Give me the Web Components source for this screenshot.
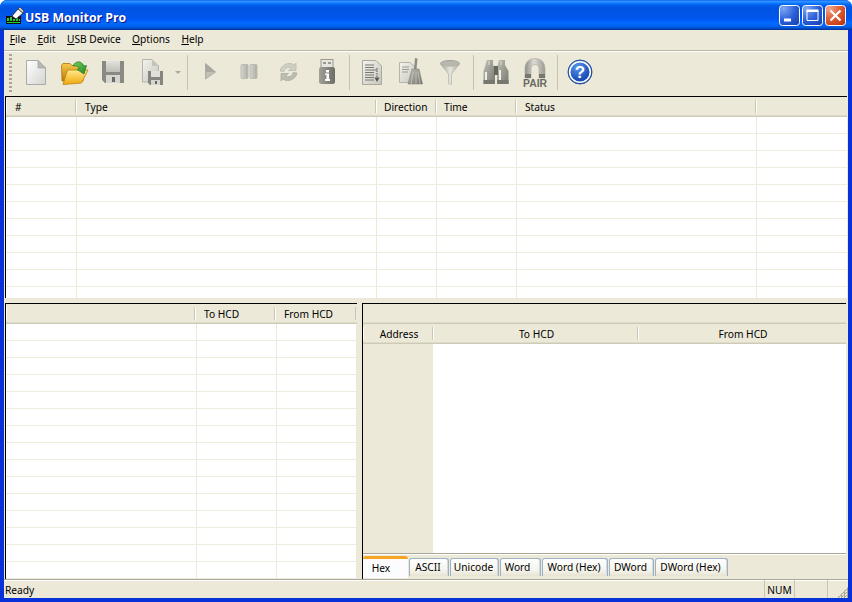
<!DOCTYPE html>
<html lang="en"><head><meta charset="utf-8"><title>USB Monitor Pro</title>
<style>
html,body{margin:0;padding:0;background:#fff}
body{font:10.2px "Noto Sans","DejaVu Sans",sans-serif;color:#000}
svg.defs{display:block;width:0;height:0}
</style></head><body>
<svg class="defs" aria-hidden="true"><defs>
<linearGradient id="pg" x1="0" y1="0" x2="1" y2="1"><stop offset="0" stop-color="#fff"/><stop offset="1" stop-color="#d4d4d0"/></linearGradient>
<linearGradient id="pg2" x1="0" y1="0" x2="1" y2="1"><stop offset="0" stop-color="#f4f4ee"/><stop offset="1" stop-color="#c6c6be"/></linearGradient>
<linearGradient id="fy" x1="0" y1="0" x2="0" y2="1"><stop offset="0" stop-color="#ffe98a"/><stop offset="1" stop-color="#f0a80c"/></linearGradient>
<linearGradient id="fb" x1="0" y1="0" x2="0" y2="1"><stop offset="0" stop-color="#f7c94a"/><stop offset="1" stop-color="#b97a0a"/></linearGradient>
<linearGradient id="ga" x1="0" y1="0" x2="1" y2="1"><stop offset="0" stop-color="#7fd05f"/><stop offset="1" stop-color="#1c8a26"/></linearGradient>
<linearGradient id="fl" x1="0" y1="0" x2="0" y2="1"><stop offset="0" stop-color="#e2e2dc"/><stop offset="1" stop-color="#bfbfb8"/></linearGradient>
<linearGradient id="dk" x1="0" y1="0" x2="1" y2="0"><stop offset="0" stop-color="#a0a098"/><stop offset=".5" stop-color="#88887f"/><stop offset="1" stop-color="#6c6c64"/></linearGradient>
<linearGradient id="pl" x1="0" y1="0" x2="1" y2="0"><stop offset="0" stop-color="#d6d6ce"/><stop offset="1" stop-color="#acaca4"/></linearGradient>
<linearGradient id="fun" x1="0" y1="0" x2="1" y2="0"><stop offset="0" stop-color="#9c9c92"/><stop offset=".5" stop-color="#e6e6dc"/><stop offset="1" stop-color="#a8a8a0"/></linearGradient>
<linearGradient id="mag" x1="0" y1="0" x2="1" y2="0"><stop offset="0" stop-color="#8f8f88"/><stop offset=".45" stop-color="#dcdcd4"/><stop offset="1" stop-color="#9a9a92"/></linearGradient>
<radialGradient id="hb" cx=".4" cy=".3" r=".8"><stop offset="0" stop-color="#5f98ea"/><stop offset=".6" stop-color="#1f55bd"/><stop offset="1" stop-color="#123c96"/></radialGradient>
<linearGradient id="br" x1="0" y1="0" x2="1" y2="1"><stop offset="0" stop-color="#c0c0b6"/><stop offset="1" stop-color="#77776f"/></linearGradient>
</defs></svg>

<x-window>
  <x-titlebar slot="title">USB Monitor Pro</x-titlebar>
  <x-menubar>
    <x-menu key="F" rest="ile"></x-menu>
    <x-menu key="E" rest="dit"></x-menu>
    <x-menu key="U" rest="SB Device"></x-menu>
    <x-menu key="O" rest="ptions"></x-menu>
    <x-menu key="H" rest="elp"></x-menu>
  </x-menubar>
  <x-toolbar>
    <x-tool><svg viewBox="0 0 30 30"><path d="M6.5 3.5H18L25.5 11V27.5H6.5Z" fill="url(#pg)" stroke="#aaa"/><path d="M18 3.5V11H25.5Z" fill="#b8b8b4" stroke="#999" stroke-width=".6"/></svg></x-tool>
    <x-tool><svg viewBox="0 0 30 30"><path d="M3 24L2.5 8.5 4 6.5H11L13 8.5H24V24Z" fill="url(#fb)" stroke="#a97408" stroke-width=".8"/><path d="M4 27.5L8.5 13H29L22.5 26Z" fill="url(#fy)" stroke="#c08a10" stroke-width=".9"/><path d="M14 9C16 4 22 3 25 9L27.5 8.5 25 17 18 12.5 20.5 11.5C19 9 17 8.5 14 9Z" fill="url(#ga)" stroke="#1b7a22" stroke-width=".7"/></svg></x-tool>
    <x-tool><svg viewBox="0 0 30 30"><path d="M4 4H26V26H7L4 23Z" fill="#8a8a84"/><rect x="8" y="4" width="14" height="11" fill="url(#fl)"/><path d="M8 18H22V26H8Z" fill="#d6d6d0"/><rect x="14" y="20" width="3" height="5" fill="#6a6a64"/></svg></x-tool>
    <x-tool><svg viewBox="0 0 30 30"><path d="M5.5 2.5H15L21.5 9V25H5.5Z" fill="url(#pg2)" stroke="#b4b4ac"/><path d="M15 2.5V9H21.5Z" fill="#c4c4bc"/><path d="M11 14H26V28H13L11 26Z" fill="#85857e"/><rect x="14" y="14" width="9" height="6" fill="#e0e0da"/><rect x="14" y="23" width="9" height="5" fill="#d6d6d0"/><rect x="18" y="24" width="2" height="3" fill="#666"/></svg></x-tool>
    <x-drop></x-drop>
    <x-sep></x-sep>
    <x-tool><svg viewBox="0 0 30 30"><path d="M10.5 6.5L20.5 15 10.5 22Z" fill="#c0c0b4" stroke="#aeaea4"/><path d="M10.5 6.5L20.5 15H10.5Z" fill="#a8a89e"/></svg></x-tool>
    <x-tool><svg viewBox="0 0 30 30"><rect x="7" y="7.5" width="7" height="14" rx="1" fill="url(#pl)" stroke="#bcbcb2"/><rect x="16" y="7.5" width="7" height="14" rx="1" fill="url(#pl)" stroke="#bcbcb2"/></svg></x-tool>
    <x-tool><svg viewBox="0 0 30 30"><path d="M7 14C8 8 16 4 21 8L23 6V13.5H15.5L18.5 11C15 9 11.5 11 11 14.5Z" fill="#cfcfc6" stroke="#b4b4aa" stroke-width=".7"/><path d="M24 16C23 22 15 26 10 22L8 24V16.5H15.5L12.5 19C16 21 19.5 19 20 15.5Z" fill="#bcbcb2" stroke="#a8a89e" stroke-width=".7"/></svg></x-tool>
    <x-tool><svg viewBox="0 0 30 30"><rect x="9" y="2.5" width="12" height="10" fill="#e6e6de" stroke="#9a9a92"/><rect x="11" y="5" width="3" height="2" fill="#9a9a92"/><rect x="16" y="5" width="3" height="2" fill="#9a9a92"/><rect x="7" y="10" width="16" height="17" rx="2.5" fill="url(#dk)"/><rect x="14" y="13" width="3" height="2.5" fill="#fff"/><path d="M13 16.5H17V22H18V24H13V22H14.5V18H13Z" fill="#fff"/></svg></x-tool>
    <x-sep></x-sep>
    <x-tool><svg viewBox="0 0 30 30"><path d="M5.5 3.5H19L24.5 9V27.5H5.5Z" fill="url(#pg2)" stroke="#a8a8a0"/><path d="M8 8H17M8 10.5H17M8 13H20M8 15.5H17M8 18H17M8 20.5H17M8 23H17" stroke="#77776f"/><path d="M20 11V21" stroke="#555" stroke-dasharray="1.5 1"/><path d="M17.5 20.5H22.5L20 25Z" fill="#555"/></svg></x-tool>
    <x-tool><svg viewBox="0 0 30 30"><path d="M3.5 5.5H14L19 10V25.5H3.5Z" fill="url(#pg2)" stroke="#b4b4ac"/><path d="M6 10H13M6 12.5H13M6 15H12" stroke="#9a9a92"/><path d="M19 1L21.5 1.5 20.5 12H18Z" fill="#8c8c84"/><path d="M16 12H23L26.5 27H12Z" fill="url(#br)" stroke="#77776f" stroke-width=".5"/><path d="M17 15L15 27M20 15V27M22 15L24 27" stroke="#c9c9c0" stroke-width=".7"/></svg></x-tool>
    <x-tool><svg viewBox="0 0 30 30"><ellipse cx="15" cy="6.5" rx="9.5" ry="3" fill="#b8b8ae" stroke="#a0a096"/><path d="M5.5 7L13.5 17V26.5L16.5 27.5V17L24.5 7C20 10 10 10 5.5 7Z" fill="url(#fun)" stroke="#b4b4aa" stroke-width=".7"/></svg></x-tool>
    <x-sep wide></x-sep>
    <x-tool><svg viewBox="0 0 30 30"><path d="M6 3H12V8L14 10V27H2.5V14Z" fill="url(#br)"/><path d="M18 3H24V8L27.5 14V27H16V10Z" fill="url(#br)"/><rect x="13" y="9" width="4" height="9" fill="#66665f"/><path d="M5 15V24M19 13V24" stroke="#eeeee6" stroke-width="2"/><path d="M8 4V8M20 4V8" stroke="#e0e0d6"/><path d="M2.5 23H14V27H2.5ZM16 23H27.5V27H16Z" fill="#77776f"/></svg></x-tool>
    <x-tool><svg viewBox="0 0 30 30"><path d="M5 21V12C5 5 9 1.5 15 1.5S25 5 25 12V21H19V12C19 9 17.5 7.5 15 7.5S11 9 11 12V21Z" fill="url(#mag)" stroke="#aaaaa0" stroke-width=".6"/><rect x="5" y="17" width="6" height="4" fill="#77776f"/><rect x="19" y="17" width="6" height="4" fill="#77776f"/><text x="15" y="30" text-anchor="middle" font-family="Liberation Sans" font-weight="700" font-size="10" fill="#6a6a62" textLength="24" lengthAdjust="spacingAndGlyphs">PAIR</text></svg></x-tool>
    <x-sep></x-sep>
    <x-tool><svg viewBox="0 0 30 30"><circle cx="15" cy="15" r="12" fill="url(#hb)" stroke="#2a4f9f"/><circle cx="15" cy="15" r="10.3" fill="none" stroke="#fff" stroke-width="1.6"/><text x="15" y="21" text-anchor="middle" font-family="Liberation Sans" font-weight="700" font-size="17" fill="#fff">?</text></svg></x-tool>
  </x-toolbar>
  <x-list class="top" cols="71,300,60,80,240" rows="11" style="height:202px;margin-right:1px">
    <x-col w="70">#</x-col><x-col w="300">Type</x-col><x-col w="60" tight>Direction</x-col><x-col w="80" tight>Time</x-col><x-col w="240">Status</x-col><x-col w="91" flat></x-col>
  </x-list>
  <x-split>
    <x-list cols="191,80,80" rows="15" style="width:352px;height:100%">
      <x-col w="189"></x-col><x-col w="80">To HCD</x-col><x-col w="81">From HCD</x-col>
    </x-list>
    <x-hexpane>
      <x-col slot="a" w="70" center>Address</x-col><x-col slot="a" w="205" center>To HCD</x-col><x-col slot="a" w="208" center flat>From HCD</x-col>
      <x-tab slot="tabs" active w="45">Hex</x-tab>
      <x-tab slot="tabs" w="40">ASCII</x-tab>
      <x-tab slot="tabs" w="49">Unicode</x-tab>
      <x-tab slot="tabs" w="41" style="padding-right:6px">Word</x-tab>
      <x-tab slot="tabs" w="66">Word (Hex)</x-tab>
      <x-tab slot="tabs" w="45">DWord</x-tab>
      <x-tab slot="tabs" w="73">DWord (Hex)</x-tab>
    </x-hexpane>
  </x-split>
  <x-status>
    <x-pane grow>Ready</x-pane><x-pane w="30" center>NUM</x-pane><x-pane w="33"></x-pane><x-pane w="21" last></x-pane>
  </x-status>
</x-window>

<script>
function def(name, css, html, init){
  customElements.define(name, class extends HTMLElement{
    constructor(){super();const r=this.attachShadow({mode:'open'});r.innerHTML='<style>'+css+'</style>'+html;}
    connectedCallback(){ if(init&&!this._i){this._i=1;init.call(this,this.shadowRoot);} }
  });
}
def('x-window',`:host{display:flex;flex-direction:column;width:852px;height:602px;overflow:hidden;border-radius:7px 7px 0 0;background:#0831d9;box-sizing:border-box;position:relative}
 .body{flex:1;min-height:0;display:flex;flex-direction:column;margin:0 4px 4px 4px;background:#ece9d8;}`,
 `<slot name="title"></slot><div class="body"><slot></slot></div>`);
def('x-titlebar',`:host{display:flex;align-items:center;height:30px;flex:none;padding:0 6px 0 6px;box-sizing:border-box;
 background:linear-gradient(180deg,#0058ee 0,#3593ff 1px,#288eff 2px,#127dff 3px,#036ffc 4px,#0262ee 5px,#0057e5 7px,#0054e3 9px,#0055eb 17px,#005bf5 20px,#026afe 23px,#0062ef 26px,#0052d6 28px,#0040ab 29px,#003092 30px);
 font:700 12.3px "Open Sans","DejaVu Sans",sans-serif;color:#fff;text-shadow:1px 1px 0 #0f1089}
 .ico{width:18px;height:18px;margin:2px 1px 0 0;flex:none;display:block}
 .t{flex:1;padding-top:4px}
 .b{display:block;width:21px;height:21px;flex:none}
 .bs{display:flex;gap:2px}`,
 `<svg class="ico" viewBox="0 0 18 18"><path d="M0 9H15V17H0Z" fill="#111"/><path d="M1 15H14V16H1Z" fill="#20d030"/><path d="M1 11H3V14H1ZM4 10H6V14H4ZM7 12H9V14H7ZM10 11H12V14H10ZM13 12H14V14H13Z" fill="#20d030"/><path d="M6 9L12 2 17 6 10 12Z" fill="#fff" stroke="#222" stroke-width=".8"/><path d="M12 2L14 0 18 4 17 6Z" fill="#ccc" stroke="#222" stroke-width=".6"/></svg>
 <span class="t"><slot></slot></span>
 <span class="bs">
 <svg class="b" viewBox="0 0 21 21"><defs><radialGradient id="mb" cx=".2" cy=".15" r="1"><stop offset="0" stop-color="#7fa6f2"/><stop offset=".6" stop-color="#2a5fd8"/><stop offset="1" stop-color="#1c46b8"/></radialGradient></defs><rect x=".5" y=".5" width="20" height="20" rx="3" fill="url(#mb)" stroke="#fff"/><rect x="5" y="13.5" width="7" height="3" fill="#fff"/></svg>
 <svg class="b" viewBox="0 0 21 21"><rect x=".5" y=".5" width="20" height="20" rx="3" fill="url(#mb)" stroke="#fff"/><path d="M5 6V15.5H16V6Z" fill="none" stroke="#fff"/><rect x="4.5" y="4.5" width="12" height="2.5" fill="#fff"/></svg>
 <svg class="b" viewBox="0 0 21 21"><defs><radialGradient id="cb" cx=".2" cy=".15" r="1"><stop offset="0" stop-color="#f0a58c"/><stop offset=".55" stop-color="#df5a32"/><stop offset="1" stop-color="#bd3a16"/></radialGradient></defs><rect x=".5" y=".5" width="20" height="20" rx="3" fill="url(#cb)" stroke="#fff"/><path d="M5.5 5.5L15.5 15.5M15.5 5.5L5.5 15.5" stroke="#fff" stroke-width="2.2"/></svg>
 </span>`);
def('x-menubar',`:host{display:flex;flex:none;height:20px;align-items:center;border-bottom:1px solid #b9b6a4;box-sizing:content-box}`,`<slot></slot>`);
def('x-menu',`:host{display:block;padding:0 5.7px;line-height:18px;margin-bottom:2px} u{text-underline-offset:1px}`,`<u id="k"></u><span id="r"></span>`,function(r){r.getElementById('k').textContent=this.getAttribute('key');r.getElementById('r').textContent=this.getAttribute('rest');});
def('x-toolbar',`:host{display:flex;flex:none;height:45px;border-top:1px solid #fff;box-sizing:border-box;align-items:stretch;padding-left:11.5px;background:#ece9d8}
 .g{width:3px;margin:2px 4px 2px -7px;flex:none;background:repeating-linear-gradient(180deg,#a8a594 0 2px,#ece9d8 2px 4px)}`,`<div class="g"></div><slot></slot>`);
def('x-tool',`:host{display:flex;width:39px;flex:none;align-items:center;justify-content:center;padding-bottom:4px;box-sizing:border-box} ::slotted(svg){width:30px;height:30px;display:block;overflow:visible}`,`<slot></slot>`);
def('x-sep',`:host{display:flex;width:6px;flex:none;justify-content:center;padding:3px 0 6px;box-sizing:border-box} :host([wide]){width:7px} i{display:block;width:1px;background:#c5c2b0}`,`<i></i>`);
def('x-drop',`:host{display:flex;width:13px;flex:none;justify-content:center;align-items:center;padding-bottom:4px;box-sizing:border-box} i{display:block;width:0;height:0;border:3px solid transparent;border-top-color:#adab9b;border-bottom:0;margin-left:-1px}`,`<i></i>`);
def('x-col',`:host{display:flex;flex:none;box-sizing:border-box;height:100%;align-items:center;padding:2px 0 0 9px;white-space:nowrap;line-height:1;
 background:linear-gradient(#c8c5b3,#c8c5b3) right 3px/1px 13px no-repeat,linear-gradient(#fff,#fff) left 3px/1px 13px no-repeat}
 :host([tight]){padding-left:8px}
 :host([flat]){background:linear-gradient(#fff,#fff) left 3px/1px 13px no-repeat} :host([center]){justify-content:center;padding-left:2px}`,`<slot></slot>`,function(){this.style.width=this.getAttribute('w')+'px';});
def('x-list',`:host{display:flex;flex-direction:column;flex:none;box-sizing:border-box;border-top:1px solid #000;border-left:1px solid #000;margin-left:1px;background:#fff;overflow:hidden}
 .h{display:flex;flex:none;height:19px;background:#ece9d8;border-bottom:1px solid #cdcab8;box-shadow:inset 0 -1px 0 #dedbc9}
 .row{display:flex;flex:none;height:17px;box-sizing:border-box;border-bottom:1px solid #efecdc}
 .c{flex:none;box-sizing:border-box;border-right:1px solid #ece9d8}`,
 `<div class="h"><slot></slot></div><div id="b"></div>`,function(r){
   const cols=this.getAttribute('cols').split(',');const b=r.getElementById('b');
   for(let i=0;i<+this.getAttribute('rows');i++){const d=document.createElement('div');d.className='row';
     cols.forEach(w=>{const c=document.createElement('div');c.className='c';c.style.width=w+'px';d.appendChild(c);});b.appendChild(d);}
 });
def('x-split',`:host{display:flex;flex:1;min-height:0;margin-top:5px;gap:5px;box-sizing:border-box}`,`<slot></slot>`);
def('x-hexpane',`:host{display:flex;flex-direction:column;width:484px;flex:none;box-sizing:border-box;border-left:1px solid #000;border-top:1px solid #000;background:#fff}
 .e{height:19px;flex:none;background:#ece9d8;border-bottom:1px solid #cdcab8;box-shadow:inset 0 -1px 0 #dedbc9}
 .h{height:19px;flex:none;display:flex;background:#ece9d8;border-bottom:1px solid #cdcab8;box-shadow:inset 0 -1px 0 #dedbc9}
 .m{flex:1;min-height:0;display:flex}
 .addr{width:70px;background:#ece9d8}
 .tabs{height:26px;flex:none;background:#ece9d8;border-top:1px solid #a8a59a;box-shadow:inset 0 1px 0 #fff;display:flex;padding:2px 0 0 0;gap:1px;box-sizing:border-box}`,
 `<div class="e"></div><div class="h"><slot name="a"></slot></div><div class="m"><div class="addr"></div></div><div class="tabs"><slot name="tabs"></slot></div>`);
def('x-tab',`:host{display:flex;flex:none;box-sizing:border-box;height:18px;margin-top:2px;padding-right:2px;align-items:center;justify-content:center;border:1px solid #9db2c4;border-bottom:0;border-radius:3px 3px 0 0;background:linear-gradient(#fff,#f4f3ea 70%,#e6e3d2);box-shadow:inset -1px 0 0 #d4dae0;white-space:nowrap;line-height:1}
 :host([active]){height:22px;margin-top:0;background:#fcfcfe;border:0;border-top:3px solid #f5a623;padding:0 9px 0 0;box-shadow:none}`,`<slot></slot>`,function(){this.style.width=this.getAttribute('w')+'px';});
def('x-status',`:host{display:flex;flex:none;height:19px;border-top:1px solid #aca899;box-shadow:inset 0 1px 0 #fff;align-items:stretch;box-sizing:border-box}`,`<slot></slot>`);
def('x-pane',`:host{display:flex;align-items:center;box-sizing:border-box;padding:3px 0 0 1px;flex:none;border-left:1px solid #c8c5b3;white-space:nowrap;line-height:1;position:relative}
 :host([grow]){flex:1;border-left:0} :host([center]){justify-content:center;padding-left:0}
 .grip{display:none} :host([last]) .grip{display:block;position:absolute;right:0;bottom:0;width:11px;height:11px;
 background:conic-gradient(#a8a594 25%,transparent 0 50%,#a8a594 0 75%,transparent 0) 0 0/3px 3px;clip-path:polygon(100% 0,100% 100%,0 100%)}`,`<slot></slot><div class="grip"></div>`,function(){const w=this.getAttribute('w');if(w)this.style.width=w+'px';});
</script>
</body></html>
